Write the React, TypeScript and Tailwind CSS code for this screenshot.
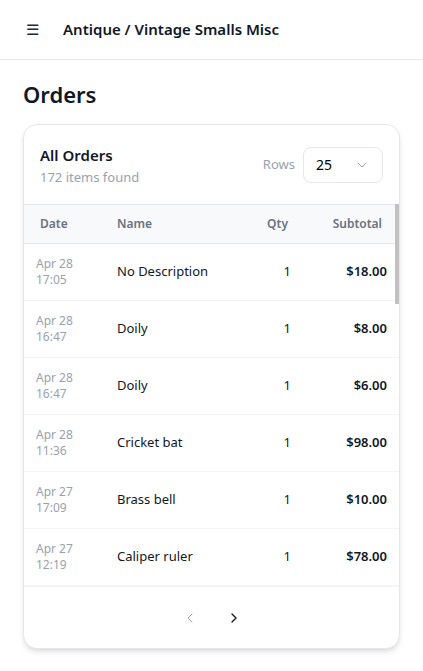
import { ChevronDown, ChevronLeft, ChevronRight } from "lucide-react";

type Order = { date: string; time: string; name: string; qty: number; subtotal: string };

const orders: Order[] = [
  { date: "Apr 28", time: "17:05", name: "No Description", qty: 1, subtotal: "$18.00" },
  { date: "Apr 28", time: "16:47", name: "Doily", qty: 1, subtotal: "$8.00" },
  { date: "Apr 28", time: "16:47", name: "Doily", qty: 1, subtotal: "$6.00" },
  { date: "Apr 28", time: "11:36", name: "Cricket bat", qty: 1, subtotal: "$98.00" },
  { date: "Apr 27", time: "17:09", name: "Brass bell", qty: 1, subtotal: "$10.00" },
  { date: "Apr 27", time: "12:19", name: "Caliper ruler", qty: 1, subtotal: "$78.00" },
];

const font = "font-['Noto_Sans','Open_Sans',sans-serif]";

export default function App() {
  return (
    <div className={`${font} min-h-screen bg-white text-gray-900`}>
      <header className="flex h-[60px] items-center border-b border-gray-200 px-[26px]">
        <span className="text-[15px] leading-none text-gray-800">☰</span>
        <h2 className="ml-[24px] text-[15px] font-semibold text-gray-900">Antique / Vintage Smalls Misc</h2>
      </header>

      <main className="px-[23px] pt-[18px]">
        <h1 className="text-[22px] font-semibold leading-8 text-[#111827]">Orders</h1>

        <section className="mt-[14px] overflow-hidden rounded-[14px] border border-gray-200 bg-white shadow-md">
          <div className="flex h-[79px] items-center justify-between px-4">
            <div>
              <h3 className="text-[15px] font-semibold leading-6 text-gray-900">All Orders</h3>
              <p className="text-[13px] leading-5 text-gray-400">172 items found</p>
            </div>
            <div className="flex items-center gap-2">
              <span className="text-[13px] text-gray-400">Rows</span>
              <button className="flex h-9 w-[80px] items-center justify-between rounded-lg border border-gray-200 pl-3 pr-3 text-[14px] text-black">
                25
                <ChevronDown className="h-4 w-4 text-gray-400" strokeWidth={1.5} />
              </button>
            </div>
          </div>

          <div className="relative">
            <div className="grid h-10 grid-cols-[93px_1fr_67px_108px] items-center border-y border-gray-200 bg-[#f8f9fb] text-[12px] font-semibold text-gray-500">
              <div className="pl-4">Date</div>
              <div>Name</div>
              <div className="pr-[3px] text-right">Qty</div>
              <div className="pr-[17px] text-right">Subtotal</div>
            </div>
            {orders.map((o, i) => (
              <div
                key={i}
                className="grid h-[57px] grid-cols-[93px_1fr_67px_108px] items-center border-b border-gray-100 text-[13px] last:border-b-0"
              >
                <div className="pl-3 text-[12px] leading-4 text-gray-400">
                  <div>{o.date}</div>
                  <div>{o.time}</div>
                </div>
                <div className="text-gray-900">{o.name}</div>
                <div className="text-right">{o.qty}</div>
                <div className="pr-3 text-right font-semibold">{o.subtotal}</div>
              </div>
            ))}
            <div className="absolute right-0 top-0 h-[100px] w-[4px] bg-[#c1c1c1]" />
          </div>

          <div className="flex h-[62px] items-center justify-center gap-7 border-t border-gray-100">
            <ChevronLeft className="h-4 w-4 text-gray-400" strokeWidth={1.5} />
            <ChevronRight className="h-4 w-4 text-gray-900" strokeWidth={2} />
          </div>
        </section>
      </main>
    </div>
  );
}
